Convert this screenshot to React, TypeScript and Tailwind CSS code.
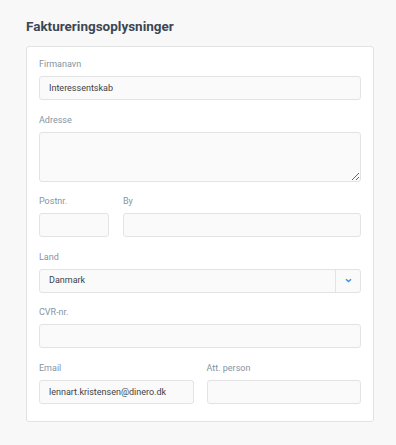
import React from "react";

const Label = ({ children }: { children: React.ReactNode }) => (
  <label className="block text-[9px] leading-[12px] text-[#8594a1] mb-[6px]">{children}</label>
);

const inputCls =
  "block w-full h-[24px] rounded-[3px] border border-[#e3e3e3] bg-[#fafafa] px-[9px] text-[9px] text-[#3d4248] outline-none";

const App = () => {
  return (
    <div className="min-h-[445px] w-full bg-[#f8f8f8] pt-[17px] pl-[26px] font-['Roboto',sans-serif]">
      <h1 className="text-[13.5px] font-bold leading-[18px] text-[#3d4652] mb-[11px]">Faktureringsoplysninger</h1>
      <div className="w-[348px] rounded-[3px] border border-[#e3e3e3] bg-white px-[12px] pt-[11px] pb-[17px] flex flex-col gap-[13.5px]">
        <div>
          <Label>Firmanavn</Label>
          <input className={inputCls} defaultValue="Interessentskab" />
        </div>
        <div>
          <Label>Adresse</Label>
          <textarea className="block w-full h-[50px] rounded-[3px] border border-[#e3e3e3] bg-[#fafafa] px-[9px] text-[9px] outline-none resize-y" />
        </div>
        <div className="flex gap-[14px]">
          <div className="w-[70px]">
            <Label>Postnr.</Label>
            <input className={inputCls} />
          </div>
          <div className="flex-1">
            <Label>By</Label>
            <input className={inputCls} />
          </div>
        </div>
        <div>
          <Label>Land</Label>
          <div className="flex h-[24px] rounded-[3px] border border-[#e3e3e3] bg-[#fafafa]">
            <div className="flex-1 flex items-center px-[9px] text-[9px] text-[#3d4248] border-r border-[#e3e3e3]">Danmark</div>
            <div className="w-[24px] flex items-center justify-center">
              <svg width="7" height="5" viewBox="0 0 7 5" fill="none">
                <path d="M1 1.2L3.5 3.6L6 1.2" stroke="#3b8fe0" strokeWidth="1.4" />
              </svg>
            </div>
          </div>
        </div>
        <div>
          <Label>CVR-nr.</Label>
          <input className={inputCls} />
        </div>
        <div className="grid grid-cols-2 gap-[13px]">
          <div>
            <Label>Email</Label>
            <input className={inputCls} defaultValue="lennart.kristensen@dinero.dk" />
          </div>
          <div>
            <Label>Att. person</Label>
            <input className={inputCls} />
          </div>
        </div>
      </div>
    </div>
  );
};

export default App;
